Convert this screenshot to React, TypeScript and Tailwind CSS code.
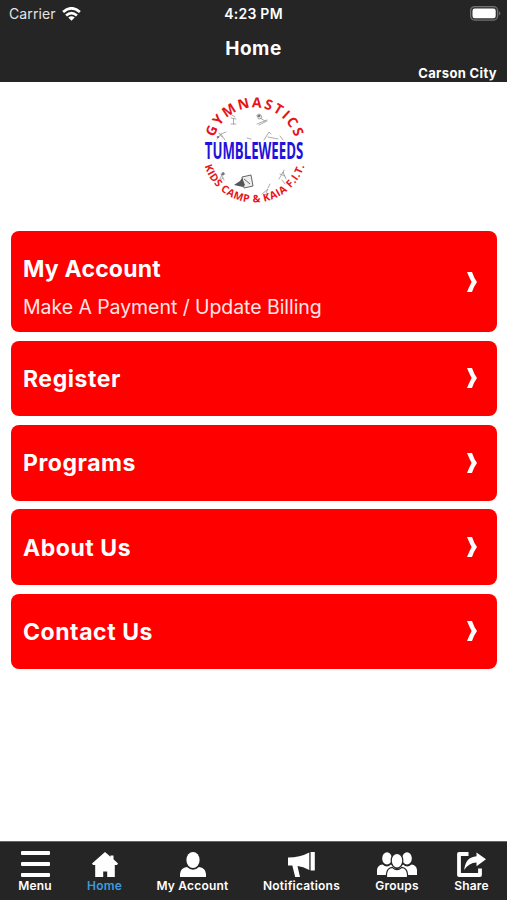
import type { ReactNode } from "react";

function Logo() {
  return (
    <svg viewBox="195 88 120 125" className="h-[125px] w-[120px]" aria-label="Tumbleweeds">
      <defs>
        <path id="arcTop" d="M 212.5 149.5 A 42 42 0 0 1 296.5 149.5" />
        <path id="arcBottom" d="M 202 150 A 52.5 52.5 0 0 0 307 150" />
      </defs>
      <g stroke="#8a8a8a" strokeWidth="0.7" fill="none" strokeLinecap="round">
        <path d="M231 118 L236 119 M233.5 118.5 L233.5 124 M231 124 L236 124 M232 115 L235 117" />
        <path d="M257 115 q2 -2 4 0 l1 3 l-3 1 z M257 124 L267 120 M259 125 L267 121 M260 118 L265 121" />
        <path d="M217 139 L221 134 L226 132 M221 134 L225 140 M219 133 L222 137" />
        <path d="M264 140 L269 132 L271 134 M268 137 L278 139 M280 136 L283 140 M247 138 L251 139" />
        <path d="M220 179 L223 172 L225 174 M221 174 L224 180 M219 181 L223 178" />
        <path d="M279 179 L283 172 L286 179 M280 174 L285 176 M284 170 L283 173 M282 180 L285 184" />
        <path d="M262 194 L268 189 L266 193 M268 188 L270 184 M264 195 L267 194" />
      </g>
      <path d="M242 177 L251 175 L253 186 L244 188 Z M244 179 L250 184" fill="#eee" stroke="#666" strokeWidth="1" />
      <path d="M234 185 L240 181 L242 178 L245 185 L243 187 Z" fill="#555" />
      <ellipse cx="218" cy="137" rx="1.3" ry="1" fill="#777" />
      <ellipse cx="223" cy="174" rx="1.5" ry="1.4" fill="#777" />
      <ellipse cx="259" cy="116" rx="1.5" ry="1.3" fill="#777" />
      <text fill="#e8131b" fontSize="14" className="font-['Open_Sans',sans-serif] font-bold">
        <textPath href="#arcTop" startOffset="50%" textAnchor="middle" textLength="107">
          GYMNASTICS
        </textPath>
      </text>
      <text fill="#e8131b" fontSize="10.4" className="font-['Open_Sans',sans-serif] font-bold">
        <textPath href="#arcBottom" startOffset="50%" textAnchor="middle" textLength="132">
          KIDS CAMP &amp; KAIA F.I.T.
        </textPath>
      </text>
      <text
        x="0"
        y="0"
        transform="translate(204.8 158.8) scale(0.6 1)"
        fill="#1f12dc"
        fontSize="24"
        textLength="164"
        lengthAdjust="spacingAndGlyphs"
        className="font-['Open_Sans',sans-serif] font-bold"
      >
        TUMBLEWEEDS
      </text>
    </svg>
  );
}

function Card({ title, subtitle }: { title: string; subtitle?: string }) {
  return (
    <a
      className={`flex items-center justify-between rounded-[8px] bg-[#ff0000] pr-5 pl-3 text-white ${
        subtitle ? "h-[101px]" : "h-[75.6px]"
      }`}
    >
      <span className={`flex flex-col ${subtitle ? "pt-[13px]" : "pt-px"}`}>
        <span className={`text-[23px] leading-[30px] font-bold ${subtitle ? "tracking-[0.2px]" : "tracking-[0.55px]"}`}>
          {title}
        </span>
        {subtitle && (
          <span className="mt-2 text-[19.5px] leading-[30px] tracking-[-0.06px] text-[#ffe4e4]">{subtitle}</span>
        )}
      </span>
      <svg viewBox="0 0 10 20" className="h-5 w-[10px]" fill="#fff">
        <path d="M0 0 H5 Q7 6 10 10 Q7 14 5 20 H0 Q2.5 14 4.6 10 Q2.5 6 0 0 Z" />
      </svg>
    </a>
  );
}

function Tab({ label, active, className, children }: { label: string; active?: boolean; className: string; children: ReactNode }) {
  return (
    <a className={`flex shrink-0 flex-col items-center ${className}`}>
      <span className="flex h-[27px] items-end">{children}</span>
      <span className={`mt-px text-[12px] leading-4 font-semibold whitespace-nowrap tracking-[0.2px] ${active ? "text-[#3d9bdc]" : "text-white"}`}>
        {label}
      </span>
    </a>
  );
}

export default function App() {
  return (
    <div className="flex h-[900px] w-[507px] flex-col overflow-hidden bg-white font-['Inter',sans-serif]">
      <header className="flex h-[81.5px] shrink-0 flex-col bg-[#252525] text-white">
        <div className="grid h-7 grid-cols-3 items-center pr-[6px] pl-[9px]">
          <div className="flex items-center gap-[6px] pb-px text-[14px] tracking-[0.1px] text-[#e4e4e4]">
            <span>Carrier</span>
            <svg viewBox="0 0 19 14" className="h-[14px] w-[19px]" fill="none" stroke="#fff" strokeWidth="2.7">
              <path d="M1.1 5.1 Q9.5 -2.5 17.9 5.1" />
              <path d="M4.1 8.6 Q9.5 3.8 14.9 8.6" />
              <path d="M6.3 10.5 Q9.5 8 12.7 10.5 L9.5 13.8 Z" fill="#fff" stroke="none" />
            </svg>
          </div>
          <div className="pr-[3px] pb-[2px] text-center text-[14px] font-semibold tracking-[0.25px] whitespace-nowrap">4:23 PM</div>
          <svg viewBox="0 0 31 15" className="mb-px h-[15px] w-[31px] justify-self-end">
            <rect x="0.6" y="0.6" width="27" height="13.5" rx="4" fill="#303030" stroke="#717171" strokeWidth="1.2" />
            <rect x="2.5" y="2.5" width="23.2" height="9.7" rx="2.2" fill="#fff" />
            <path d="M28.8 5 Q31.7 7.3 28.8 9.8 Z" fill="#717171" />
          </svg>
        </div>
        <h1 className="mt-[7px] text-center text-[19px] leading-[28px] font-bold tracking-[0.5px]">Home</h1>
        <div className="mt-[2px] pr-[10px] text-right text-[13px] leading-4 font-bold tracking-[0.35px]">Carson City</div>
      </header>

      <main className="flex grow flex-col">
        <div className="flex h-[149.5px] shrink-0 justify-center pt-[6.5px] pl-[3px]">
          <Logo />
        </div>
        <nav className="flex flex-col gap-[8.7px] pr-[10px] pl-[11px]">
          <Card title="My Account" subtitle="Make A Payment / Update Billing" />
          <Card title="Register" />
          <Card title="Programs" />
          <Card title="About Us" />
          <Card title="Contact Us" />
        </nav>
      </main>

      <footer className="flex h-[59px] shrink-0 border-t border-[#666] bg-[#252525] pt-[8px]">
        <Tab label="Menu" className="w-[70px]">
          <svg viewBox="0 0 29 26" className="h-[26px] w-[29px]" fill="#fff">
            <rect y="0" width="29" height="4" rx="1" />
            <rect y="11" width="29" height="4" rx="1" />
            <rect y="22" width="29" height="4" rx="1" />
          </svg>
        </Tab>
        <Tab label="Home" active className="w-[69px]">
          <svg viewBox="0 0 26 25" className="h-[25px] w-[26px]" fill="#fff">
            <path d="M13 0 L18.5 4.7 V3.5 H21.5 V7.3 L26 11.5 L25 13 H22.8 V25 H15.2 V19.5 H11.2 V25 H3.2 V13 H1 L0 11.5 Z" />
          </svg>
        </Tab>
        <Tab label="My Account" className="w-[107px]">
          <svg viewBox="0 0 26 25" className="h-[25px] w-[26px]" fill="#fff">
            <ellipse cx="13" cy="8" rx="6.6" ry="8" />
            <path d="M0 25 V22 Q0.3 16 7 15 Q13 20.5 19 15 Q25.7 16 26 22 V25 Z" />
          </svg>
        </Tab>
        <Tab label="Notifications" className="w-[111px]">
          <svg viewBox="0 0 27 25" className="h-[25px] w-[27px]" fill="#fff">
            <path d="M0 5.5 Q12 5.5 21.3 0.5 V18 Q15 14.5 9.5 14 L12 25 H7.2 L4.3 13.6 H0 Z M22.6 0 H26.8 V18.6 H22.6 Z" />
          </svg>
        </Tab>
        <Tab label="Groups" className="w-[80px]">
          <svg viewBox="0 0 40 25" className="h-[25px] w-[40px]" fill="#fff">
            <ellipse cx="10" cy="6.4" rx="4.8" ry="6.2" />
            <ellipse cx="30" cy="6.4" rx="4.8" ry="6.2" />
            <path d="M0 23 V18 Q0.5 13 5.5 12.5 Q10 16.5 14 12.5 L20 18 V23 Z M40 23 V18 Q39.5 13 34.5 12.5 Q30 16.5 26 12.5 L20 18 V23 Z" />
            <g stroke="#252525" strokeWidth="1.2">
              <ellipse cx="20" cy="8.7" rx="5.8" ry="7.4" />
              <path d="M9.5 25.6 V22 Q10 16 15.3 15.3 Q20 20 24.7 15.3 Q30 16 30.5 22 V25.6 Z" />
            </g>
          </svg>
        </Tab>
        <Tab label="Share" className="w-[69px]">
          <svg viewBox="0 0 29 25" className="h-[25px] w-[29px]">
            <path d="M11.5 2 H2 V23 H23 V16.5" fill="none" stroke="#fff" strokeWidth="3.8" strokeLinejoin="round" />
            <path d="M19.5 0.5 L29 7.3 L19.5 14.2 V10.5 Q12 10.5 7.2 18 Q8.4 5 19.5 4.2 Z" fill="#fff" />
          </svg>
        </Tab>
      </footer>
    </div>
  );
}
